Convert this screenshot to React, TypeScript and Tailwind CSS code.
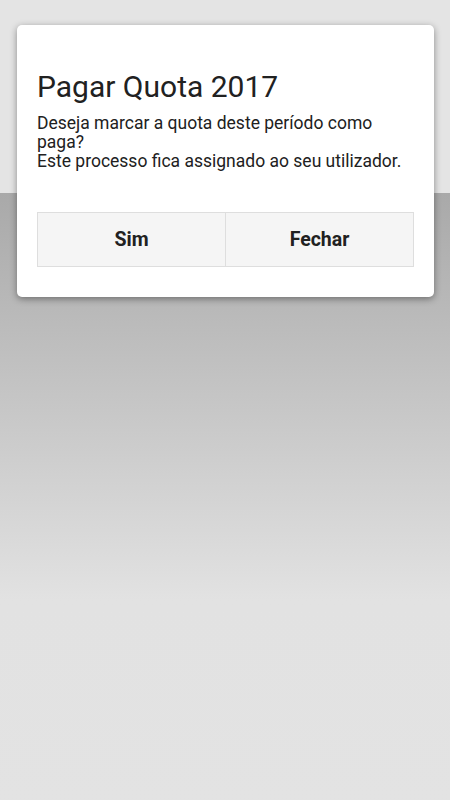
export default function App() {
  return (
    <div
      className="relative h-[800px] w-[450px] overflow-hidden bg-[#e3e3e3]"
      style={{ fontFamily: 'Roboto, "Noto Sans", sans-serif' }}
    >
      <div className="flex h-full flex-col">
        <div className="h-[193px] bg-[#e4e4e4]" />
        <div className="flex-1 bg-gradient-to-b from-[#a9a9a9] via-[#e2e2e2] via-[67%] to-[#e3e3e3]" />
      </div>

      {/* dialog */}
      <div className="absolute left-[17px] top-[25px] w-[417px] rounded-[5px] bg-white px-5 pb-[30px] pt-[44px] shadow-[0_2px_7px_rgba(0,0,0,0.4)]">
        <h1 className="text-[30px] leading-[36px] text-[#212121]">Pagar Quota 2017</h1>
        <p className="mt-[9px] text-[17.5px] leading-[19px] text-[#212121]">
          Deseja marcar a quota deste período como paga?
          <br />
          Este processo fica assignado ao seu utilizador.
        </p>
        <div className="mt-[41px] flex">
          <button className="h-[55px] flex-1 border border-[#dedede] bg-[#f5f5f5] text-[19.5px] font-bold text-[#212121]">
            Sim
          </button>
          <button className="h-[55px] flex-1 border border-l-0 border-[#dedede] bg-[#f5f5f5] text-[19.5px] font-bold text-[#212121]">
            Fechar
          </button>
        </div>
      </div>
    </div>
  );
}
